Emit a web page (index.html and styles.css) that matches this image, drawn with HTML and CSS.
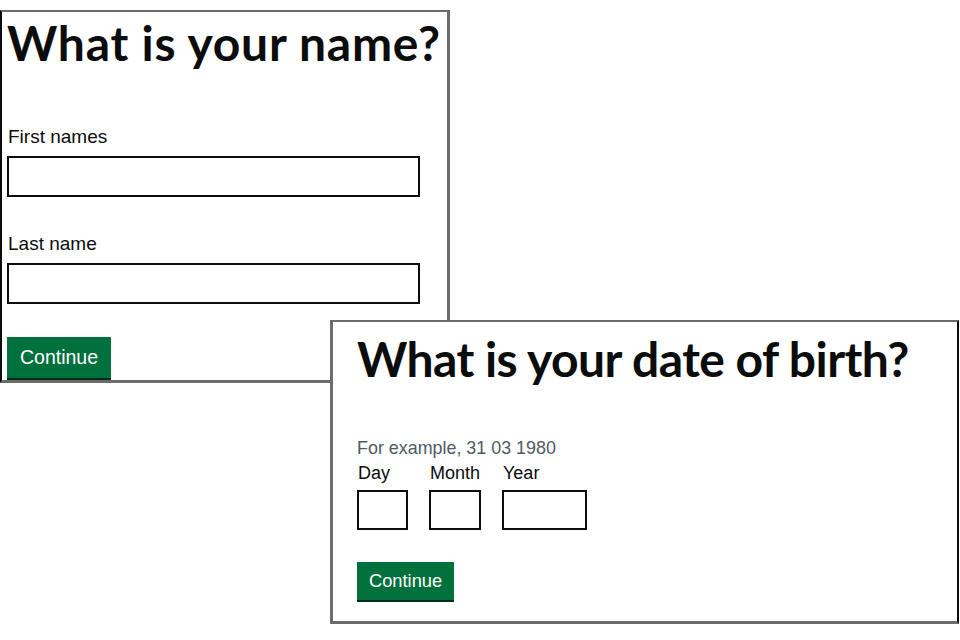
FILE: index.html
```html
<!DOCTYPE html>
<html lang="en">
<head>
<meta charset="utf-8">
<title>GOV.UK question pages</title>
<link rel="stylesheet" href="styles.css">
</head>
<body>
<div class="canvas">
  <section class="window window-name">
    <h1 class="heading heading-name">What is your name?</h1>
    <div class="field field-first">
      <label class="label" for="first">First names</label>
      <input class="text-input" id="first" type="text">
    </div>
    <div class="field field-last">
      <label class="label" for="last">Last name</label>
      <input class="text-input" id="last" type="text">
    </div>
    <button class="button button-name" type="button">Continue</button>
  </section>

  <section class="window window-dob">
    <h1 class="heading heading-dob">What is your date of birth?</h1>
    <div class="hint">For example, 31 03 1980</div>
    <div class="date-input">
      <div class="date-item">
        <label class="date-label" for="day">Day</label>
        <input class="date-box date-day" id="day" type="text">
      </div>
      <div class="date-item">
        <label class="date-label" for="month">Month</label>
        <input class="date-box date-month" id="month" type="text">
      </div>
      <div class="date-item">
        <label class="date-label" for="year">Year</label>
        <input class="date-box date-year" id="year" type="text">
      </div>
    </div>
    <button class="button button-dob" type="button">Continue</button>
  </section>
</div>
</body>
</html>
```

FILE: styles.css
```css
html, body {
  margin: 0;
  padding: 0;
  background: #ffffff;
}

body {
  font-family: "Liberation Sans", Arial, sans-serif;
  color: #0b0c0c;
}

.canvas {
  position: relative;
  width: 960px;
  height: 640px;
  overflow: hidden;
  background: #ffffff;
}

.window {
  position: absolute;
  box-sizing: border-box;
  background: #ffffff;
  display: flex;
  flex-direction: column;
  align-items: flex-start;
}

.window-name {
  left: 0;
  top: 10px;
  width: 450px;
  height: 373px;
  border: 3px solid #6b6b6b;
  border-top-width: 2px;
  border-left: 2px solid #0b0c0c;
  padding: 6px 0 0 5px;
  z-index: 1;
}

.window-dob {
  left: 330px;
  top: 320px;
  width: 629px;
  height: 304px;
  border: 3px solid #6b6b6b;
  border-top-width: 2px;
  border-right: 2px solid #0b0c0c;
  padding: 12px 0 0 24px;
  z-index: 2;
}

.heading {
  margin: 0;
  font-family: Lato, "Liberation Sans", Arial, sans-serif;
  font-weight: 700;
  font-size: 48px;
  line-height: 50px;
  white-space: nowrap;
}

.heading-name {
  margin-left: 0;
  letter-spacing: 0.75px;
}

.heading-dob {
  margin-left: 0;
  letter-spacing: -0.55px;
}

.field {
  display: flex;
  flex-direction: column;
  align-items: flex-start;
}

.field-first {
  margin-top: 56px;
}

.field-last {
  margin-top: 34px;
}

.label {
  display: block;
  font-size: 19px;
  line-height: 25px;
  margin-left: 1px;
}

.text-input {
  display: block;
  box-sizing: border-box;
  width: 413px;
  height: 41px;
  margin: 7px 0 0 0;
  padding: 5px;
  border: 2px solid #0b0c0c;
  border-radius: 0;
  background: #ffffff;
  font: inherit;
}

.button {
  box-sizing: border-box;
  border: 2px solid transparent;
  border-radius: 0;
  background: #00703c;
  color: #ffffff;
  font-family: "Liberation Sans", Arial, sans-serif;
  box-shadow: 0 2px 0 #002d18;
  cursor: pointer;
}

.button-name {
  margin-top: 33px;
  font-size: 19.5px;
  line-height: 23px;
  padding: 7px 11px 7px;
}

.button-dob {
  margin-top: 32px;
  font-size: 18.3px;
  line-height: 20px;
  padding: 7px 10px 7px;
}

.hint {
  margin-top: 54px;
  font-size: 17.9px;
  line-height: 20px;
  color: #505a5f;
}

.date-input {
  display: flex;
  gap: 21px;
  margin-top: 5px;
}

.date-item {
  display: flex;
  flex-direction: column;
  align-items: flex-start;
}

.date-label {
  font-size: 18px;
  line-height: 20px;
  margin-left: 1px;
}

.date-box {
  box-sizing: border-box;
  height: 40px;
  margin: 7px 0 0 0;
  padding: 4px;
  border: 2px solid #0b0c0c;
  border-radius: 0;
  background: #ffffff;
  font: inherit;
}

.date-day {
  width: 51px;
}

.date-month {
  width: 52px;
}

.date-year {
  width: 85px;
}
```
